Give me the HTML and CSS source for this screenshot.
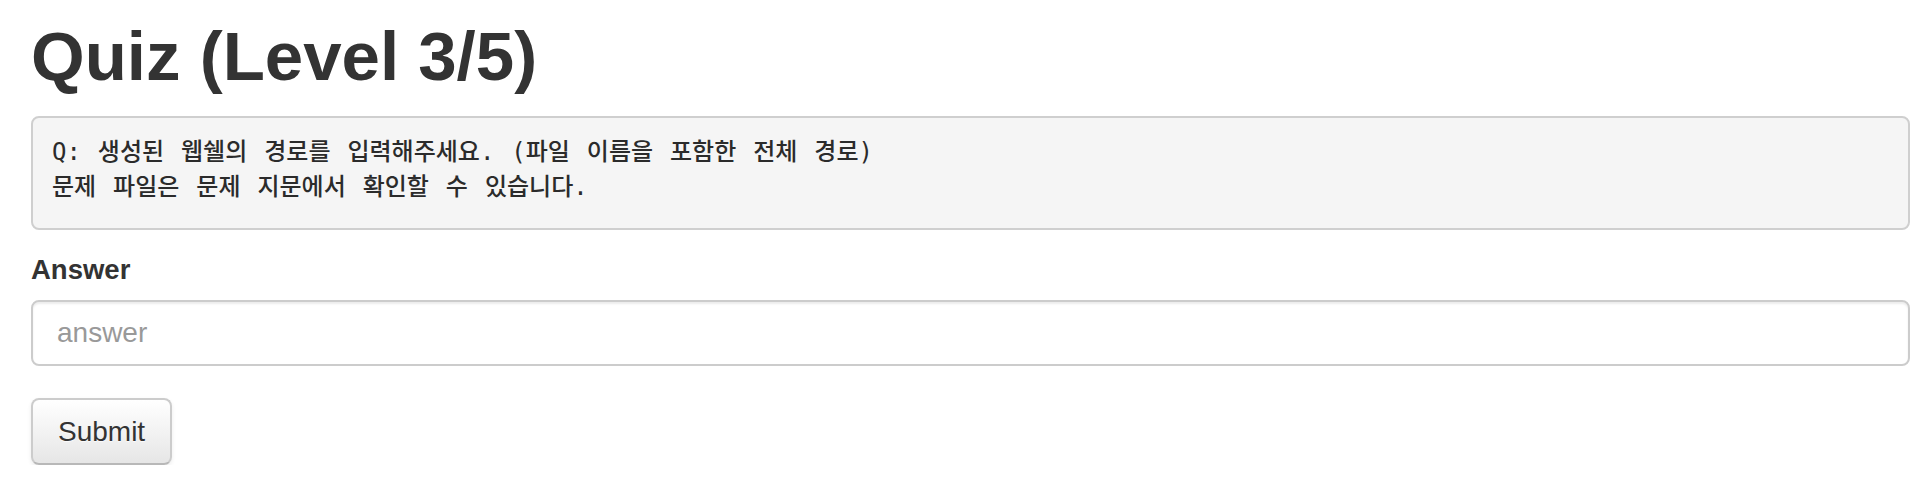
FILE: index.html
```html
<!DOCTYPE html>
<html lang="ko">
<head>
<meta charset="utf-8">
<title>Quiz (Level 3/5)</title>
<link rel="stylesheet" href="styles.css">
</head>
<body>
<div class="container">
  <h1 class="title">Quiz (Level 3/5)</h1>
  <pre class="question">Q: 생성된 웹쉘의 경로를 입력해주세요. (파일 이름을 포함한 전체 경로)
문제 파일은 문제 지문에서 확인할 수 있습니다.</pre>
  <form class="answer-form" onsubmit="return false;">
    <label class="field-label" for="answer">Answer</label>
    <input class="field-input" id="answer" type="text" placeholder="answer">
    <button class="btn" type="submit">Submit</button>
  </form>
</div>
</body>
</html>
```

FILE: styles.css
```css
html, body {
  margin: 0;
  padding: 0;
  background: #ffffff;
}

body {
  font-family: "Liberation Sans", Arial, Helvetica, sans-serif;
  color: #333333;
}

.container {
  padding: 17px 18px 0 31px;
  display: flex;
  flex-direction: column;
}

.title {
  margin: 0;
  font-size: 69px;
  line-height: 80px;
  font-weight: bold;
  color: #333333;
}

.question {
  margin: 19px 0 0 0;
  padding: 17px 19px 23px 19px;
  background: #f5f5f5;
  border: 2px solid #cfcfcf;
  border-radius: 8px;
  font-family: "DejaVu Sans Mono", "Noto Sans CJK KR", monospace;
  font-size: 24px;
  font-weight: 500;
  line-height: 35px;
  word-spacing: 2.5px;
  color: #2b2b2b;
  white-space: pre;
}

.answer-form {
  display: flex;
  flex-direction: column;
  align-items: flex-start;
  margin-top: 20px;
}

.field-label {
  font-size: 27.5px;
  line-height: 40px;
  font-weight: bold;
  color: #333333;
  margin-bottom: 10px;
}

.field-input {
  box-sizing: border-box;
  align-self: stretch;
  height: 66px;
  margin: 0;
  padding: 0 24px;
  border: 2px solid #cccccc;
  border-radius: 8px;
  background: #ffffff;
  box-shadow: inset 0 2px 2px rgba(0, 0, 0, 0.075);
  font-family: "Liberation Sans", Arial, Helvetica, sans-serif;
  font-size: 28px;
  color: #555555;
  outline: none;
}

.field-input::placeholder {
  color: #999999;
}

.btn {
  box-sizing: border-box;
  margin-top: 32px;
  height: 67px;
  padding: 0 25px;
  border: 2px solid #cccccc;
  border-bottom-color: #b8b8b8;
  border-radius: 8px;
  background: linear-gradient(to bottom, #ffffff, #e6e6e6);
  box-shadow: inset 0 2px 0 rgba(255, 255, 255, 0.2), 0 2px 4px rgba(0, 0, 0, 0.08);
  font-family: "Liberation Sans", Arial, Helvetica, sans-serif;
  font-size: 28px;
  color: #333333;
  text-shadow: 0 1px 1px rgba(255, 255, 255, 0.75);
  cursor: pointer;
}
```
